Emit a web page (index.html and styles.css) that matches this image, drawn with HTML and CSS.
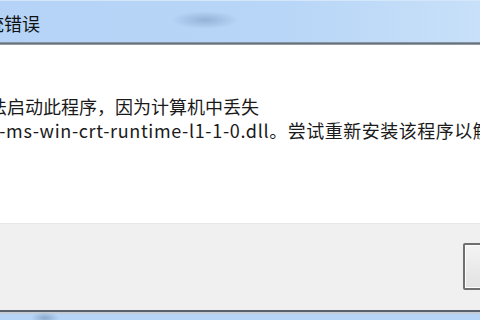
FILE: index.html
```html
<!DOCTYPE html>
<html lang="zh-CN">
<head>
    <meta charset="UTF-8">
    <meta name="viewport" content="width=device-width, initial-scale=1.0">
    <title>系统错误</title>
    <link rel="stylesheet" href="styles.css">
</head>
<body>
    <div class="dialog">
        <!-- 标题栏 -->
        <div class="titlebar">
            <span class="title">系统错误</span>
        </div>
        <div class="titlebar-edge"></div>
        <!-- 提示信息 -->
        <div class="content">
            <p class="msg line1">无法启动此程序，因为计算机中丢失</p>
            <p class="msg line2"><span class="dll">api-ms-win-crt-runtime-l1-1-0.dll</span>。尝试重新安装该程序以解决此问题。</p>
        </div>
        <!-- 按钮区 -->
        <div class="footer">
            <a href="javascript:;" class="btn">确定</a>
        </div>
        <div class="frame-bottom"></div>
    </div>
</body>
</html>
```

FILE: styles.css
```css
body{
    margin: 0;
    font-family: "Microsoft YaHei", "Noto Sans CJK SC", sans-serif;
}
.dialog{
    width: 480px;
    height: 320px;
    overflow: hidden;
    display: flex;
    flex-direction: column;
    background-color: #fff;
}
.titlebar{
    height: 42px;
    flex: none;
    display: flex;
    align-items: center;
    background:
        radial-gradient(ellipse 34px 9px at 205px 19px, rgba(120,150,185,.55), rgba(120,150,185,0)),
        linear-gradient(90deg, #b4d3f6 0%, #b8d6f7 60%, #c8e0f9 100%);
    border-top: 1px solid #d4e6fa;
    box-sizing: border-box;
}
.title{
    font-size: 18px;
    color: #111;
    margin-left: -32px;   /* 左侧被裁掉 */
    white-space: nowrap;
    line-height: 1;
    padding-top: 2px;
}
.titlebar-edge{
    height: 3px;
    flex: none;
    background: linear-gradient(#9aa6b3, #5c6670 60%, #b9c2cb);
}
.content{
    height: 178px;
    flex: none;
    padding-top: 49px;
    box-sizing: border-box;
    overflow: hidden;
}
.msg{
    margin: 0;
    font-size: 18px;
    line-height: 24px;
    color: #1a1a1a;
    white-space: nowrap;
}
.line1{
    margin-left: -29px;
}
.line2{
    margin-left: -29px;
    letter-spacing: 0.5px;
}
.dll{
    letter-spacing: 0.65px;
}
.footer{
    height: 87px;
    flex: none;
    background-color: #f0f0f0;
    border-top: 1px solid #e8e8e8;
    box-sizing: border-box;
    display: flex;
    justify-content: flex-end;
    align-items: flex-start;
    padding-top: 19px;
}
.btn{
    width: 112px;
    height: 47px;
    flex: none;
    margin-right: -95px;
    box-sizing: border-box;
    display: flex;
    align-items: center;
    justify-content: center;
    font-size: 18px;
    border: 2px solid #6f6f6f;
    box-shadow: inset 0 0 0 1px #fcfcfc;
    background: linear-gradient(#f4f4f4, #e2e2e2);
    border-radius: 2px;
    color: #111;
    text-decoration: none;
}
.frame-bottom{
    flex: 1;
    border-top: 2px solid #56616c;
    background:
        radial-gradient(ellipse 14px 6px at 45px 6px, rgba(110,140,175,.6), rgba(110,140,175,0)),
        linear-gradient(#c3ccd5 0, #c3ccd5 2px, #b6d4f5 2px);
}
```
